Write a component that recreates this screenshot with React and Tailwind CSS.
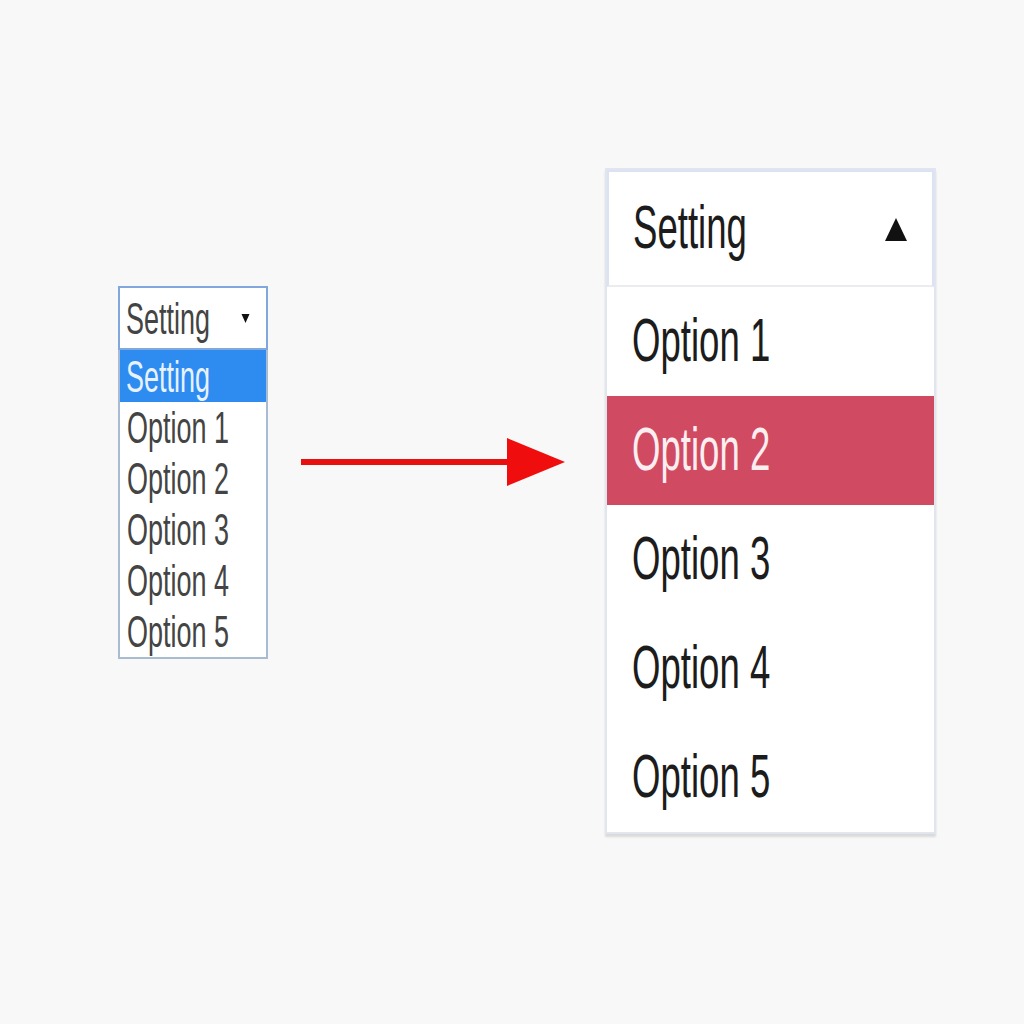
const options = ["Option 1", "Option 2", "Option 3", "Option 4", "Option 5"];

function Narrow({ children, className = "" }) {
  // the reference text is squeezed sideways, so scale it down on x
  return (
    <span className={"inline-block origin-left scale-x-[0.6] whitespace-nowrap " + className}>
      {children}
    </span>
  );
}

function NativeSelect() {
  return (
    <div className="w-[150px] mt-[286px] ml-[118px] shrink-0 text-[45px] leading-none text-[#444]">
      <div className="h-[64px] bg-white border-2 border-[#82a7dc] flex items-center pl-[6px] pr-[16px]">
        <div className="flex-1 min-w-0">
          <Narrow>Setting</Narrow>
        </div>
        <svg className="shrink-0" width="9" height="12" viewBox="0 0 9 12">
          <path d="M0.5 2h8L4.5 11z" fill="#111" />
        </svg>
      </div>
      <div className="bg-white border-2 border-t-0 border-[#a9bbd3]">
        <div className="h-[52px] bg-[#2e8cf0] text-[#e8f2ff] flex items-center pl-[6px]">
          <Narrow>Setting</Narrow>
        </div>
        {options.map((o) => (
          <div key={o} className="h-[51px] flex items-center pl-[7px]">
            <Narrow>{o}</Narrow>
          </div>
        ))}
      </div>
    </div>
  );
}

function Arrow() {
  return (
    <svg className="mt-[438px] ml-[33px] shrink-0" width="266" height="48" viewBox="0 0 266 48">
      <rect x="0" y="21" width="212" height="6" fill="#e8100f" />
      <path d="M206 0L264 24L206 48z" fill="#f00d0d" />
    </svg>
  );
}

function CustomSelect() {
  return (
    <div className="w-[331px] mt-[168px] ml-[38px] shrink-0 bg-white border-2 border-[#e1e5ee] shadow-[0_3px_2px_rgba(0,0,0,0.12)] text-[61px] leading-none text-[#1c1c1c]">
      <div className="h-[117px] border-2 border-[#dbe2f4] border-b-[#ececf0] flex items-center pl-[24px] pr-[24px]">
        <div className="flex-1 min-w-0">
          <Narrow className="pb-[2px]">Setting</Narrow>
        </div>
        <svg className="shrink-0" width="24" height="24" viewBox="0 0 24 24">
          <path d="M12 1L23 24H1z" fill="#111" />
        </svg>
      </div>
      {options.map((o) => (
        <div
          key={o}
          className={
            "h-[109px] flex items-center pl-[25px] " +
            (o === "Option 2" ? "bg-[#d04a62] text-[#fbeef1]" : "")
          }
        >
          <Narrow className="pb-[2px]">{o}</Narrow>
        </div>
      ))}
    </div>
  );
}

export default function App() {
  return (
    <div className="w-[1024px] h-[1024px] bg-[#f8f8f9] flex items-start overflow-hidden font-['Liberation_Sans',Arial,sans-serif]">
      <NativeSelect />
      <Arrow />
      <CustomSelect />
    </div>
  );
}
